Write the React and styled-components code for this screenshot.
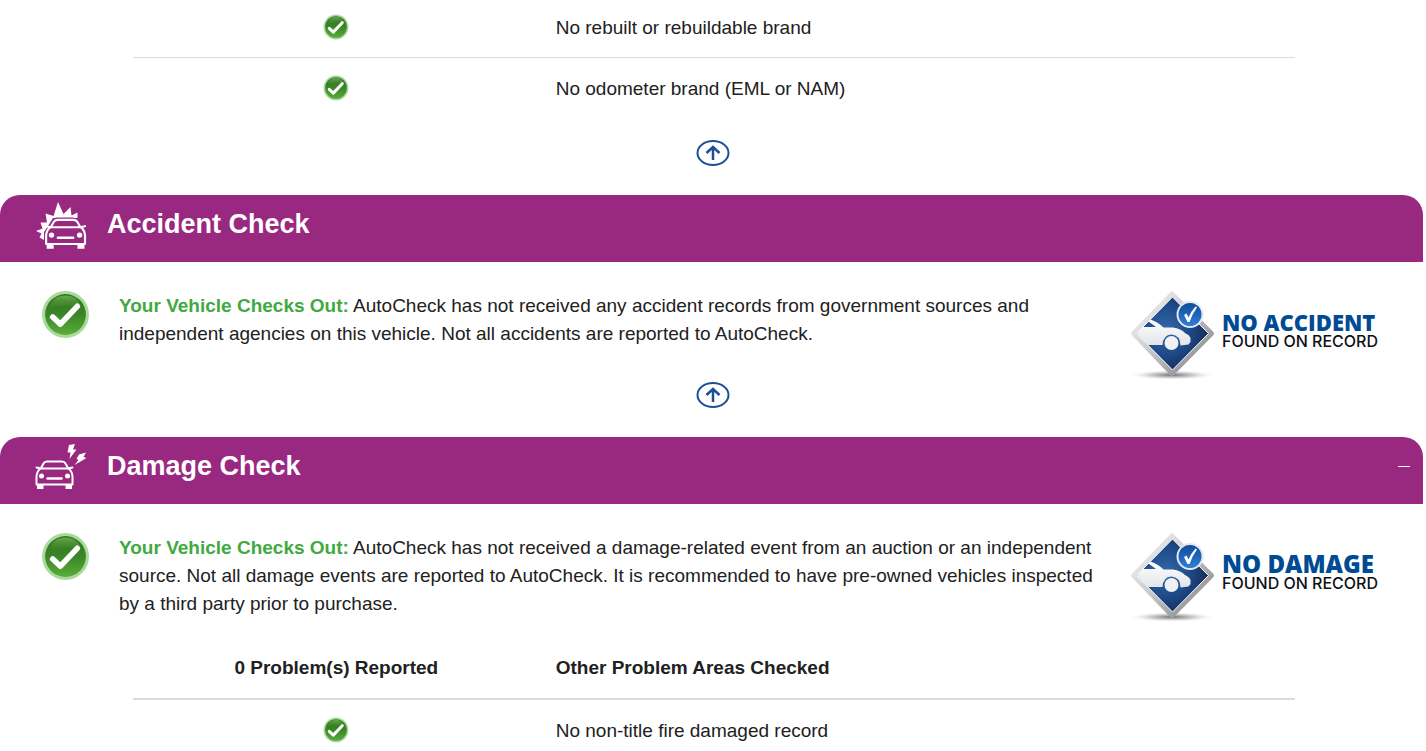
import React, { useId, useState } from "react";
import styled, { createGlobalStyle } from "styled-components";

const GlobalStyle = createGlobalStyle`
  * {
    box-sizing: border-box;
  }

  body {
    margin: 0;
    background: #fff;
    color: #212121;
    font-family: "Liberation Sans", Arial, sans-serif;
    font-size: 19px;
    line-height: 28px;
  }
`;

// --- STYLED COMPONENTS ---

const Report = styled.main`
  margin: -3px 3px 0 0;
`;

const TableArea = styled.div`
  padding: ${({ $top }) => $top || 0}px 128px 0 133px;
`;

const Table = styled.table`
  width: 100%;
  table-layout: fixed;
  border-collapse: collapse;

  th {
    padding: 16px;
    border-bottom: 2px solid #dcdcdc;
    font-weight: 700;
    text-align: left;
  }

  td {
    padding: 17px 16px 15px;
    border-bottom: 1px solid #dcdcdc;
  }

  tr:last-child td {
    border-bottom: 0;
  }

  th:first-child,
  td:first-child {
    width: 35%;
    text-align: center;
  }

  td:first-child {
    padding: 16px;
  }

  svg {
    display: block;
    margin: 0 auto;
  }
`;

const TopLinkRow = styled.div`
  display: flex;
  justify-content: center;
  padding: ${({ $top }) => $top}px 0 28px;
`;

const TopLink = styled.a`
  display: block;
  margin-left: 3px;

  svg {
    display: block;
  }
`;

const SectionBar = styled.header`
  display: flex;
  align-items: flex-start;
  gap: 20px;
  height: 67px;
  padding: 7px 13px 0 35px;
  border-radius: 20px 20px 0 0;
  background: #992881;
  color: #fff;

  svg {
    flex: none;
  }
`;

const SectionTitle = styled.h2`
  flex: 1;
  margin: 0;
  font-size: 27px;
  line-height: 44px;
`;

const CollapseButton = styled.button`
  display: flex;
  align-items: center;
  height: 44px;
  padding: 0;
  border: 0;
  background: none;
  cursor: pointer;

  &::before {
    content: "";
    width: 12px;
    height: 1px;
    background: #fff;
  }
`;

const Summary = styled.div`
  display: flex;
  align-items: flex-start;
  padding: 28px 40px 0 41px;
`;

const SummaryText = styled.p`
  flex: 1;
  margin: 2px 24px 0 29px;

  strong {
    color: #41a940;
  }
`;

const Badge = styled.div`
  display: flex;
  align-items: flex-start;
  width: 255px;

  svg {
    flex: none;
  }
`;

const BadgeText = styled.div`
  padding: 22px 0 0 4px;
  color: #101018;
  font-family: Inter, "Liberation Sans", sans-serif;
  font-size: 16px;
  font-weight: 500;
  line-height: 18px;
  white-space: nowrap;
`;

const BadgeTitle = styled.strong`
  display: block;
  color: #004b93;
  font-family: "Open Sans", "Liberation Sans", sans-serif;
  font-size: ${({ $size }) => $size}px;
  font-weight: 800;
  line-height: 20px;
`;

// --- ICONS ---

const CheckIcon = ({ size }) => {
  const id = useId();

  return (
    <svg width={size} height={size} viewBox="0 0 48 48" role="img" aria-label="OK">
      <defs>
        <linearGradient id={`${id}b`} x1="0" y1="0" x2="0" y2="1">
          <stop offset="0" stopColor="#2f7420" />
          <stop offset="0.5" stopColor="#3a8527" />
          <stop offset="1" stopColor="#5aae3a" />
        </linearGradient>
        <linearGradient id={`${id}g`} x1="0" y1="0" x2="0" y2="1">
          <stop offset="0" stopColor="#79b55f" stopOpacity="0.8" />
          <stop offset="1" stopColor="#4f9439" stopOpacity="0.1" />
        </linearGradient>
      </defs>
      <circle cx="24" cy="24" r="23" fill="#a9d99b" />
      <circle cx="24" cy="24" r="20" fill={`url(#${id}b)`} />
      <path d="M8 18C10 9 17 5.500 24 5.500S38 9 40 18C31 13 18 16 8 18Z" fill={`url(#${id}g)`} />
      <path d="M11.500 26.500L19 33.500L35.500 16" fill="none" stroke="#fff" strokeWidth="5.500" strokeLinecap="round" strokeLinejoin="round" />
    </svg>
  );
};

const ArrowUpIcon = () => (
  <svg width="34" height="28" viewBox="0 0 34 28" fill="none" stroke="#1c4f93" strokeWidth="2">
    <ellipse cx="17" cy="14" rx="15.500" ry="12" />
    <path d="M17 21V8.500M10.500 14L17 8L23.500 14" strokeWidth="2.500" />
  </svg>
);

const CarFront = ({ transform }) => (
  <g transform={transform} fill="none" stroke="#fff" strokeLinecap="round" strokeLinejoin="round">
    <path d="M6 24L8.500 19.500Q9.500 17.500 12 17.500H27Q29.500 17.500 30.500 19.500L33 24Q37 27 37.500 32V40.500H1.500V32Q2 27 6 24Z" fill="#992881" strokeWidth="2" />
    <path d="M1.500 23.500L6 24.500H33L37.500 23.500" strokeWidth="2" />
    <path d="M12.500 34.500H26.500" strokeWidth="2.500" />
    <circle cx="6.500" cy="32" r="2.500" fill="#fff" stroke="none" />
    <circle cx="32.500" cy="32" r="2.500" fill="#fff" stroke="none" />
    <path d="M2 40H8.500V45H2ZM30.500 40H37V45H30.500Z" fill="#fff" stroke="none" />
  </g>
);

const AccidentIcon = () => (
  <svg width="52" height="48" viewBox="0 0 52 48" aria-hidden="true">
    <path
      d="M1 29L7.500 26.500L5.500 20.500H12L10.500 11.500L18.500 14L23 0L28.500 12L35.500 5L36.500 13.500L42.500 10.500V16L18 16L13 24L9 30V38L4.500 35.500L6.500 31.500Z"
      fill="#fff"
    />
    <path d="M13 25L17 19Q18 16 22 15.500H38Q42 16 44 19L46 27V45H9V34Z" fill="#992881" />
    <CarFront transform="translate(9.500 -0.500) scale(1.080 1.050)" />
  </svg>
);

const DamageIcon = () => (
  <svg width="52" height="48" viewBox="0 0 52 48" aria-hidden="true">
    <CarFront />
    <path d="M34 1L40 0L38 5.500H41.500L34.500 15L35.500 8.500H32.500ZM44 10.500L51 8.500L48.500 13L51.500 14L39.500 21L43.500 16L41.500 15Z" fill="#fff" />
  </svg>
);

const RecordIcon = () => {
  const id = useId();

  return (
    <svg width="90" height="90" viewBox="0 2 90 90" aria-hidden="true">
      <defs>
        <linearGradient id={`${id}f`} x1="0" y1="0.200" x2="0.800" y2="1">
          <stop offset="0" stopColor="#f4f4f6" />
          <stop offset="0.450" stopColor="#c9cacd" />
          <stop offset="1" stopColor="#84868b" />
        </linearGradient>
        <radialGradient id={`${id}d`} cx="0.400" cy="0.450" r="0.600">
          <stop offset="0" stopColor="#3268aa" />
          <stop offset="0.550" stopColor="#1e4b8a" />
          <stop offset="1" stopColor="#152d58" />
        </radialGradient>
        <linearGradient id={`${id}c`} x1="0" y1="0" x2="0" y2="1">
          <stop offset="0" stopColor="#fff" />
          <stop offset="1" stopColor="#e2e4e8" />
        </linearGradient>
        <linearGradient id={`${id}b`} x1="0" y1="0" x2="0" y2="1">
          <stop offset="0" stopColor="#104b9a" />
          <stop offset="1" stopColor="#2f7fd6" />
        </linearGradient>
        <radialGradient id={`${id}s`}>
          <stop offset="0" stopColor="#55565a" stopOpacity="0.850" />
          <stop offset="0.500" stopColor="#8d8e92" stopOpacity="0.450" />
          <stop offset="1" stopColor="#fff" stopOpacity="0" />
        </radialGradient>
      </defs>
      <ellipse cx="44" cy="87" rx="44" ry="5" fill={`url(#${id}s)`} />
      <path d="M42.500 4Q44 2 45.500 4L85 43.500Q87 45.500 85 47.500L46 87Q44 89 42 87L4 47.500Q2 45.500 4 43.500Z" fill={`url(#${id}f)`} />
      <path d="M44.500 9L80.500 45.500L44.500 82L8.500 45.500Z" fill={`url(#${id}d)`} stroke="#fff" strokeWidth="1" />
      <path
        d="M9 45.500L15 39H28L20.500 33.500L22.500 31.500Q30 34 35.500 39.500H45Q53 40.500 57 45L61 47.500L62.500 50V54L60.500 56.500L52.500 57.500Q52 47 43.500 46.500Q35 47 34.500 57H20Z"
        fill={`url(#${id}c)`}
      />
      <circle cx="43.500" cy="55" r="7" fill="#f0f1f3" />
      <circle cx="62" cy="26.500" r="13.500" fill="#e3e8ef" />
      <circle cx="62" cy="26.500" r="11.500" fill={`url(#${id}b)`} />
      <path d="M56 27L58.500 25.500L60.500 29.500Q63 23.500 67.500 18.500L69 19.500Q64 26 61.500 34H59.500Z" fill="#fff" />
    </svg>
  );
};

// --- REACT COMPONENTS ---

const BackToTop = ({ top }) => (
  <TopLinkRow $top={top}>
    <TopLink href="#top" aria-label="Back to top">
      <ArrowUpIcon />
    </TopLink>
  </TopLinkRow>
);

const CheckRows = ({ items }) => (
  <tbody>
    {items.map((item) => (
      <tr key={item}>
        <td>
          <CheckIcon size={26} />
        </td>
        <td>{item}</td>
      </tr>
    ))}
  </tbody>
);

const CheckSummary = ({ badge, badgeSize, children }) => (
  <Summary>
    <CheckIcon size={49} />
    <SummaryText>
      <strong>Your Vehicle Checks Out:</strong> {children}
    </SummaryText>
    <Badge>
      <RecordIcon />
      <BadgeText>
        <BadgeTitle $size={badgeSize}>{badge}</BadgeTitle>
        FOUND ON RECORD
      </BadgeText>
    </Badge>
  </Summary>
);

export default function App() {
  const [open, setOpen] = useState(true);

  return (
    <>
      <GlobalStyle />
      <Report id="top">
        <TableArea>
          <Table aria-label="Title brands checked">
            <CheckRows items={["No rebuilt or rebuildable brand", "No odometer brand (EML or NAM)"]} />
          </Table>
        </TableArea>
        <BackToTop top={21} />

        <section>
          <SectionBar>
            <AccidentIcon />
            <SectionTitle>Accident Check</SectionTitle>
          </SectionBar>
          <CheckSummary badge="NO ACCIDENT" badgeSize={22}>
            AutoCheck has not received any accident records from government sources and independent agencies on this
            vehicle. Not all accidents are reported to AutoCheck.
          </CheckSummary>
          <BackToTop top={1} />
        </section>

        <section>
          <SectionBar>
            <DamageIcon />
            <SectionTitle>Damage Check</SectionTitle>
            <CollapseButton aria-label="Collapse Damage Check" aria-expanded={open} onClick={() => setOpen(!open)} />
          </SectionBar>
          {open && (
            <>
              <CheckSummary badge="NO DAMAGE" badgeSize={24}>
                AutoCheck has not received a damage-related event from an auction or an independent source. Not all
                damage events are reported to AutoCheck. It is recommended to have pre-owned vehicles inspected by a
                third party prior to purchase.
              </CheckSummary>
              <TableArea $top={16}>
                <Table>
                  <thead>
                    <tr>
                      <th scope="col">0 Problem(s) Reported</th>
                      <th scope="col">Other Problem Areas Checked</th>
                    </tr>
                  </thead>
                  <CheckRows items={["No non-title fire damaged record"]} />
                </Table>
              </TableArea>
            </>
          )}
        </section>
      </Report>
    </>
  );
}
